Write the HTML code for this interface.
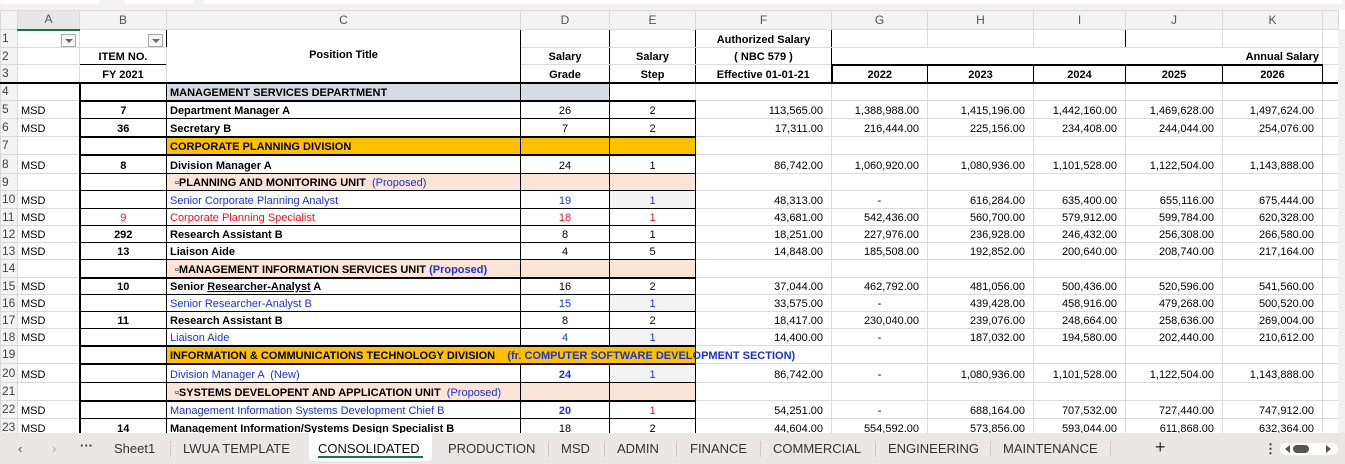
<!DOCTYPE html>
<html><head><meta charset="utf-8">
<style>
*{margin:0;padding:0;box-sizing:border-box}
body{width:1345px;height:464px;overflow:hidden;background:#fff;font-family:"Liberation Sans",sans-serif;position:relative}
#top{position:absolute;left:0;top:0;width:1345px;height:10px;background:#f3f1f1}
#top div{position:absolute;top:0;height:4px;background:#fff;border-radius:0 0 4px 4px}
table{position:absolute;left:0;top:10px;width:1338px;border-collapse:collapse;table-layout:fixed;font-size:11px}
td{border:1px solid #dadada;white-space:nowrap;overflow:visible;padding:0 3px;height:18px;vertical-align:bottom;line-height:13px}
tr.s7 td{height:17px}
tr.h td{background:#f3f3f3;color:#555;text-align:center;font-size:12px;vertical-align:middle;height:19px;border-color:#dadada}
td.r{background:#f3f3f3;color:#444;font-size:12px;padding:0 0 0 1px;border-color:#dadada;text-align:left;vertical-align:middle}
.c{text-align:center}.n{text-align:right;padding-right:8px}
.b{font-weight:bold}
.bl{color:#1a33d6}.rd{color:#e8141e}
.x{border:1px solid #000}
.xl{border-left:2px solid #000}
.g{background:#d6dce4}.o{background:#ffc000}.p{background:#fce4d6}.s{background:#f2f2f2}
.fb{display:inline-block;width:15px;height:13px;border:1px solid #aaa;background:#f5f5f5;float:right;margin-top:1px;position:relative}
.fb:after{content:"";position:absolute;left:3px;top:4px;border-left:4px solid transparent;border-right:4px solid transparent;border-top:4px solid #666}
#tabs{position:absolute;left:0;top:433px;width:1345px;height:31px;background:#ebe7e6;font-size:13px;color:#333}
#tabs span{position:absolute;top:8px}
#tabs i{position:absolute;top:8px;width:1px;height:16px;background:#cfcac9}
#act{position:absolute;left:309px;top:0;width:123px;height:28px;background:#fff;border-radius:0 0 4px 4px}
#act b{position:absolute;left:9px;right:9px;bottom:3px;height:2px;background:#1e7145}
#sb{position:absolute;left:1338px;top:29px;width:7px;height:404px;background:#f0f0f0}
</style></head><body>
<div id="top"><div style="left:0;width:100px"></div><div style="left:124px;width:70px"></div><div style="left:203px;width:1140px"></div></div>
<table>
<colgroup><col style="width:17px"><col style="width:62px"><col style="width:87px"><col style="width:354px"><col style="width:89px"><col style="width:86px"><col style="width:136px"><col style="width:96px"><col style="width:106px"><col style="width:92px"><col style="width:97px"><col style="width:100px"><col style="width:16px"></colgroup>
<tr class="h"><td></td><td style="border-bottom:2px solid #1e7145;background:#e6e6e6">A</td><td>B</td><td>C</td><td>D</td><td>E</td><td>F</td><td>G</td><td>H</td><td>I</td><td>J</td><td>K</td><td></td></tr>
<tr><td class="r">1</td><td><span class="fb"></span></td><td style="border-right:1px solid #000"><span class="fb"></span></td><td class="b c" rowspan="3" style="vertical-align:middle;border-right:1px solid #000">Position Title</td><td style="border-right:1px solid #000"></td><td style="border-right:1px solid #000"></td><td class="b c" style="border-right:1px solid #000">Authorized Salary</td><td></td><td></td><td style="border-right:1px solid #000"></td><td></td><td></td><td></td></tr>
<tr class="s7"><td class="r">2</td><td></td><td class="b c" style="border:1px solid #000;border-top:1px solid #dadada">ITEM NO.</td><td class="b c" style="border-right:1px solid #000">Salary</td><td class="b c" style="border-right:1px solid #000">Salary</td><td class="b c" style="border-right:1px solid #000">( NBC 579 )</td><td style="border-right:none"></td><td style="border:none"></td><td style="border:none"></td><td style="border:none"></td><td class="b" style="text-align:right;border-left:none">Annual Salary</td><td></td></tr>
<tr><td class="r">3</td><td></td><td class="b c" style="border-right:1px solid #000">FY 2021</td><td class="b c" style="border-right:1px solid #000">Grade</td><td class="b c" style="border-right:1px solid #000">Step</td><td class="b c" style="border-right:2px solid #000">Effective 01-01-21</td><td class="b c x" style="border-top:2px solid #000">2022</td><td class="b c x" style="border-top:2px solid #000">2023</td><td class="b c x" style="border-top:2px solid #000">2024</td><td class="b c x" style="border-top:2px solid #000">2025</td><td class="b c x" style="border-top:2px solid #000">2026</td><td></td></tr>
<tr style="border-top:2px solid #000"><td class="r">4</td><td></td><td class="x xl"></td><td class="x b g">MANAGEMENT SERVICES DEPARTMENT</td><td class="x g"></td><td></td><td></td><td></td><td></td><td></td><td></td><td></td><td></td></tr>
<tr><td class="r">5</td><td>MSD</td><td class="x xl c b" style="border-top:2px solid #000">7</td><td class="x b" style="border-top:2px solid #000">Department Manager A</td><td class="x c" style="border-top:2px solid #000">26</td><td class="x c" style="border-top:2px solid #000">2</td><td class="n">113,565.00</td><td class="n">1,388,988.00</td><td class="n">1,415,196.00</td><td class="n">1,442,160.00</td><td class="n">1,469,628.00</td><td class="n">1,497,624.00</td><td></td></tr>
<tr><td class="r">6</td><td>MSD</td><td class="x xl c b">36</td><td class="x b">Secretary B</td><td class="x c">7</td><td class="x c">2</td><td class="n">17,311.00</td><td class="n">216,444.00</td><td class="n">225,156.00</td><td class="n">234,408.00</td><td class="n">244,044.00</td><td class="n">254,076.00</td><td></td></tr>
<tr><td class="r">7</td><td></td><td class="x xl" style="border-top:2px solid #000"></td><td class="x b o" style="border-top:2px solid #000">CORPORATE PLANNING DIVISION</td><td class="x o" style="border-top:2px solid #000"></td><td class="x o" style="border-top:2px solid #000"></td><td></td><td></td><td></td><td></td><td></td><td></td><td></td></tr>
<tr><td class="r" style="height:19px">8</td><td>MSD</td><td class="x xl c b" style="border-top:2px solid #000">8</td><td class="x b" style="border-top:2px solid #000">Division Manager A</td><td class="x c" style="border-top:2px solid #000">24</td><td class="x c" style="border-top:2px solid #000">1</td><td class="n">86,742.00</td><td class="n">1,060,920.00</td><td class="n">1,080,936.00</td><td class="n">1,101,528.00</td><td class="n">1,122,504.00</td><td class="n">1,143,888.00</td><td></td></tr>
<tr class="s7"><td class="r">9</td><td></td><td class="x xl"></td><td class="x b p" style="padding-left:8px">▫PLANNING AND MONITORING UNIT <span class="bl" style="font-weight:normal">&nbsp;(Proposed)</span></td><td class="x p"></td><td class="x p"></td><td></td><td></td><td></td><td></td><td></td><td></td><td></td></tr>
<tr><td class="r">10</td><td>MSD</td><td class="x xl"></td><td class="x bl">Senior Corporate Planning Analyst</td><td class="x c bl">19</td><td class="x c bl s">1</td><td class="n">48,313.00</td><td class="c">-</td><td class="n">616,284.00</td><td class="n">635,400.00</td><td class="n">655,116.00</td><td class="n">675,444.00</td><td></td></tr>
<tr class="s7"><td class="r">11</td><td>MSD</td><td class="x xl c rd">9</td><td class="x rd">Corporate Planning Specialist</td><td class="x c rd">18</td><td class="x c rd">1</td><td class="n">43,681.00</td><td class="n">542,436.00</td><td class="n">560,700.00</td><td class="n">579,912.00</td><td class="n">599,784.00</td><td class="n">620,328.00</td><td></td></tr>
<tr class="s7"><td class="r">12</td><td>MSD</td><td class="x xl c b">292</td><td class="x b">Research Assistant B</td><td class="x c">8</td><td class="x c">1</td><td class="n">18,251.00</td><td class="n">227,976.00</td><td class="n">236,928.00</td><td class="n">246,432.00</td><td class="n">256,308.00</td><td class="n">266,580.00</td><td></td></tr>
<tr class="s7"><td class="r">13</td><td>MSD</td><td class="x xl c b">13</td><td class="x b">Liaison Aide</td><td class="x c">4</td><td class="x c">5</td><td class="n">14,848.00</td><td class="n">185,508.00</td><td class="n">192,852.00</td><td class="n">200,640.00</td><td class="n">208,740.00</td><td class="n">217,164.00</td><td></td></tr>
<tr><td class="r">14</td><td></td><td class="x xl"></td><td class="x b p" style="padding-left:8px">▫MANAGEMENT INFORMATION SERVICES UNIT <span class="bl">(Proposed)</span></td><td class="x p"></td><td class="x p"></td><td></td><td></td><td></td><td></td><td></td><td></td><td></td></tr>
<tr class="s7"><td class="r">15</td><td>MSD</td><td class="x xl c b" style="border-top:2px solid #000">10</td><td class="x b" style="border-top:2px solid #000">Senior <u>Researcher-Analyst</u> A</td><td class="x c" style="border-top:2px solid #000">16</td><td class="x c" style="border-top:2px solid #000">2</td><td class="n">37,044.00</td><td class="n">462,792.00</td><td class="n">481,056.00</td><td class="n">500,436.00</td><td class="n">520,596.00</td><td class="n">541,560.00</td><td></td></tr>
<tr class="s7"><td class="r">16</td><td>MSD</td><td class="x xl"></td><td class="x bl">Senior Researcher-Analyst B</td><td class="x c bl">15</td><td class="x c bl s">1</td><td class="n">33,575.00</td><td class="c">-</td><td class="n">439,428.00</td><td class="n">458,916.00</td><td class="n">479,268.00</td><td class="n">500,520.00</td><td></td></tr>
<tr class="s7"><td class="r">17</td><td>MSD</td><td class="x xl c b">11</td><td class="x b">Research Assistant B</td><td class="x c">8</td><td class="x c">2</td><td class="n">18,417.00</td><td class="n">230,040.00</td><td class="n">239,076.00</td><td class="n">248,664.00</td><td class="n">258,636.00</td><td class="n">269,004.00</td><td></td></tr>
<tr class="s7"><td class="r">18</td><td>MSD</td><td class="x xl"></td><td class="x bl">Liaison Aide</td><td class="x c bl">4</td><td class="x c bl s">1</td><td class="n">14,400.00</td><td class="c">-</td><td class="n">187,032.00</td><td class="n">194,580.00</td><td class="n">202,440.00</td><td class="n">210,612.00</td><td></td></tr>
<tr><td class="r">19</td><td></td><td class="x xl" style="border-top:2px solid #000"></td><td class="o b" colspan="3" style="border:1px solid #000;border-top:2px solid #000;overflow:visible">INFORMATION &amp; COMMUNICATIONS TECHNOLOGY DIVISION &nbsp;&nbsp;&nbsp;<span class="bl">(fr. COMPUTER SOFTWARE DEVELOPMENT SECTION)</span></td><td style="border-left:none"></td><td></td><td></td><td></td><td></td><td></td><td></td></tr>
<tr><td class="r" style="height:19px">20</td><td>MSD</td><td class="x xl" style="border-top:2px solid #000"></td><td class="x bl" style="border-top:2px solid #000">Division Manager A &nbsp;(New)</td><td class="x c bl b" style="border-top:2px solid #000">24</td><td class="x c bl s" style="border-top:2px solid #000">1</td><td class="n">86,742.00</td><td class="c">-</td><td class="n">1,080,936.00</td><td class="n">1,101,528.00</td><td class="n">1,122,504.00</td><td class="n">1,143,888.00</td><td></td></tr>
<tr><td class="r">21</td><td></td><td class="x xl"></td><td class="x b p" style="padding-left:8px">▫SYSTEMS DEVELOPENT AND APPLICATION UNIT <span class="bl" style="font-weight:normal">&nbsp;(Proposed)</span></td><td class="x p"></td><td class="x p"></td><td></td><td></td><td></td><td></td><td></td><td></td><td></td></tr>
<tr><td class="r">22</td><td>MSD</td><td class="x xl" style="border-top:2px solid #000"></td><td class="x bl" style="border-top:2px solid #000">Management Information Systems Development Chief B</td><td class="x c bl b" style="border-top:2px solid #000">20</td><td class="x c rd" style="border-top:2px solid #000">1</td><td class="n">54,251.00</td><td class="c">-</td><td class="n">688,164.00</td><td class="n">707,532.00</td><td class="n">727,440.00</td><td class="n">747,912.00</td><td></td></tr>
<tr><td class="r">23</td><td>MSD</td><td class="x xl c b">14</td><td class="x b">Management Information/Systems Design Specialist B</td><td class="x c">18</td><td class="x c">2</td><td class="n">44,604.00</td><td class="n">554,592.00</td><td class="n">573,856.00</td><td class="n">593,044.00</td><td class="n">611,868.00</td><td class="n">632,364.00</td><td></td></tr>
</table>
<div id="sb"></div>
<div id="tabs">
<span style="left:18px;color:#555">&#8249;</span><span style="left:52px;color:#aaa">&#8250;</span><span style="left:80px;font-weight:bold;top:5px">···</span>
<span style="left:114px">Sheet1</span><i style="left:170px"></i>
<span style="left:183px">LWUA TEMPLATE</span>
<div id="act"><b></b></div>
<span style="left:318px;color:#111">CONSOLIDATED</span>
<span style="left:448px">PRODUCTION</span><i style="left:548px"></i>
<span style="left:561px">MSD</span><i style="left:604px"></i>
<span style="left:617px">ADMIN</span><i style="left:676px"></i>
<span style="left:690px">FINANCE</span><i style="left:760px"></i>
<span style="left:773px">COMMERCIAL</span><i style="left:875px"></i>
<span style="left:888px">ENGINEERING</span><i style="left:990px"></i>
<span style="left:1003px">MAINTENANCE</span><i style="left:1110px"></i>
<span style="left:1155px;font-size:18px;top:4px">+</span>
<span style="left:1264px;font-weight:bold">⋮</span>
<div style="position:absolute;left:1280px;top:10px;width:58px;height:12px;background:#fff;border-radius:6px"></div>
<div style="position:absolute;left:1285px;top:12px;border-right:5px solid #555;border-top:4px solid transparent;border-bottom:4px solid transparent"></div>
<div style="position:absolute;left:1293px;top:12px;width:16px;height:8px;background:#555;border-radius:4px"></div>
<div style="position:absolute;left:1326px;top:12px;border-left:5px solid #555;border-top:4px solid transparent;border-bottom:4px solid transparent"></div>
</div>
</body></html>
